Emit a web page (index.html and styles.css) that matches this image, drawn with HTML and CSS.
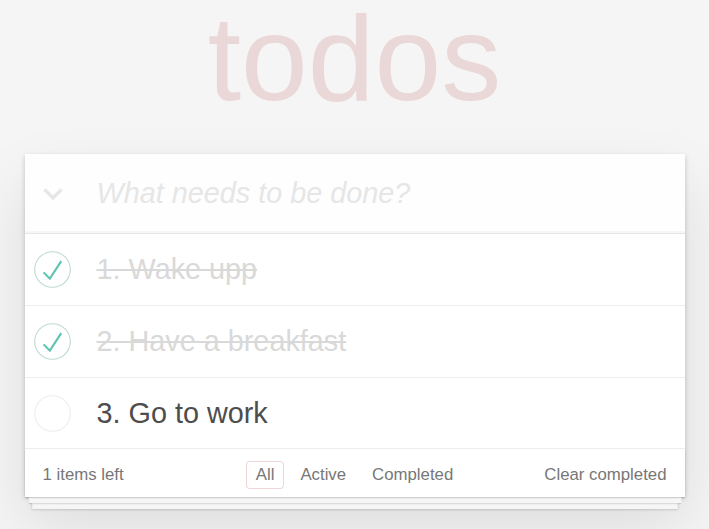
FILE: index.html
```html
<!DOCTYPE html>
<html lang="en">
<head>
<meta charset="utf-8">
<title>todos</title>
<link rel="stylesheet" href="styles.css">
</head>
<body>
<div class="page">
  <h1 class="title">todos</h1>
  <section class="todoapp">
    <header class="new-row">
      <span class="toggle-all">
        <svg width="22" height="14" viewBox="0 0 22 14"><path d="M2.5 2.5 L11 11 L19.5 2.5" fill="none" stroke="#e6e6e6" stroke-width="3.2" stroke-linejoin="miter"/></svg>
      </span>
      <input class="new-todo" type="text" placeholder="What needs to be done?">
    </header>
    <ul class="todo-list">
      <li class="todo completed">
        <span class="toggle">
          <svg width="37" height="37" viewBox="-2 -2 104 104"><circle cx="50" cy="50" r="50" fill="none" stroke="#bddad5" stroke-width="3"/><path fill="#5dc2af" d="M72 25L42 71 27 56l-4 4 20 20 34-52z"/></svg>
        </span>
        <label class="todo-label">1. Wake upp</label>
      </li>
      <li class="todo completed">
        <span class="toggle">
          <svg width="37" height="37" viewBox="-2 -2 104 104"><circle cx="50" cy="50" r="50" fill="none" stroke="#bddad5" stroke-width="3"/><path fill="#5dc2af" d="M72 25L42 71 27 56l-4 4 20 20 34-52z"/></svg>
        </span>
        <label class="todo-label">2. Have a breakfast</label>
      </li>
      <li class="todo">
        <span class="toggle">
          <svg width="37" height="37" viewBox="-2 -2 104 104"><circle cx="50" cy="50" r="50" fill="none" stroke="#ededed" stroke-width="3"/></svg>
        </span>
        <label class="todo-label">3. Go to work</label>
      </li>
    </ul>
    <footer class="footer">
      <span class="todo-count">1 items left</span>
      <ul class="filters">
        <li><a class="filter selected">All</a></li><li><a class="filter">Active</a></li><li><a class="filter">Completed</a></li>
      </ul>
      <span class="clear-completed">Clear completed</span>
    </footer>
  </section>
</div>
</body>
</html>
```
FILE: styles.css
```css
html, body {
  margin: 0;
  padding: 0;
}
body {
  background: #f5f5f5;
  color: #4d4d4d;
  font-family: "Liberation Sans", Arial, sans-serif;
  font-size: 16.8px;
  line-height: 1.4em;
}
.page {
  width: 660px;
  margin: 0 auto;
  padding-bottom: 32px;
}
.title {
  margin: 0;
  font-size: 120px;
  line-height: 116px;
  font-weight: normal;
  text-align: center;
  color: rgba(175, 47, 47, 0.15);
}
.todoapp {
  margin-top: 38px;
  background: #fff;
  box-shadow: 0 2.4px 4.8px 0 rgba(0, 0, 0, 0.2), 0 30px 60px 0 rgba(0, 0, 0, 0.1);
}
.new-row {
  display: flex;
  align-items: center;
  background: rgba(0, 0, 0, 0.003);
  box-shadow: inset 0 -2px 1px rgba(0, 0, 0, 0.03);
  border-bottom: 1px solid #e6e6e6;
}
.toggle-all {
  width: 72px;
  flex: none;
  display: flex;
  align-items: center;
  padding-left: 17px;
  box-sizing: border-box;
}
.toggle-all svg {
  display: block;
}
.new-todo {
  flex: 1;
  min-width: 0;
  margin: 0;
  border: 0;
  outline: none;
  background: transparent;
  padding: 19px 19px 20px 0;
  font-family: inherit;
  font-size: 28.8px;
  line-height: 40px;
  height: 79px;
  box-sizing: border-box;
  color: #4d4d4d;
}
.new-todo::placeholder {
  color: #e6e6e6;
  font-style: italic;
}
.todo-list {
  margin: 0;
  padding: 0;
  list-style: none;
}
.todo {
  display: flex;
  align-items: center;
  font-size: 28.8px;
  border-bottom: 1px solid #ededed;
}
.toggle {
  width: 54px;
  flex: none;
  display: flex;
  justify-content: center;
  padding-left: 1px;
  box-sizing: border-box;
}
.toggle svg {
  display: block;
}
.todo-label {
  flex: 1;
  padding: 18px 72px 18px 18px;
  line-height: 35px;
  color: #4d4d4d;
  white-space: pre-line;
}
.todo:last-child .todo-label {
  padding-bottom: 17px;
}
.todo.completed .todo-label {
  color: #d9d9d9;
  text-decoration: line-through;
}
.footer {
  display: grid;
  grid-template-columns: 1fr auto 1fr;
  align-items: center;
  height: 24px;
  padding: 12px 18px;
  color: #777;
  background: #fff;
  line-height: 24px;
  box-shadow: 0 1.2px 1.2px rgba(0, 0, 0, 0.2),
              0 9.6px 0 -3.6px #f6f6f6,
              0 10.8px 1.2px -3.6px rgba(0, 0, 0, 0.2),
              0 19.2px 0 -7.2px #f6f6f6,
              0 20.4px 2.4px -7.2px rgba(0, 0, 0, 0.2);
}
.todo-count {
  justify-self: start;
}
.filters {
  margin: 0;
  padding: 0;
  list-style: none;
  display: flex;
}
.filter {
  display: block;
  margin: 0 3.6px;
  padding: 1px 8.4px;
  line-height: 24px;
  border: 1px solid transparent;
  border-radius: 3.6px;
  color: inherit;
}
.filter.selected {
  border-color: rgba(175, 47, 47, 0.2);
}
.clear-completed {
  justify-self: end;
}
```
